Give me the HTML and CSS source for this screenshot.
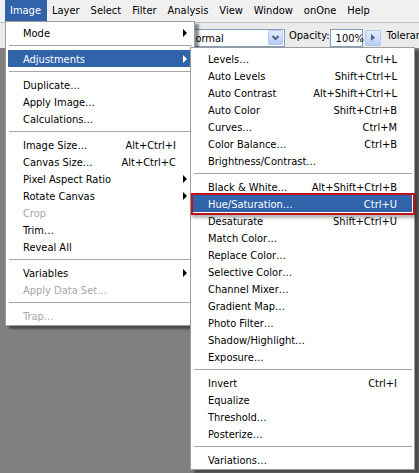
FILE: index.html
```html
<!DOCTYPE html>
<html lang="en">
<head>
<meta charset="utf-8">
<title>Image menu</title>
<link rel="stylesheet" href="styles.css">
</head>
<body>
<div class="screen">
  <nav class="menubar">
    <span class="menubar-item open">Image</span>
    <span class="menubar-item">Layer</span>
    <span class="menubar-item">Select</span>
    <span class="menubar-item">Filter</span>
    <span class="menubar-item">Analysis</span>
    <span class="menubar-item">View</span>
    <span class="menubar-item">Window</span>
    <span class="menubar-item">onOne</span>
    <span class="menubar-item">Help</span>
  </nav>

  <div class="options">
    <div class="combo">
      <span class="combo-text">Normal</span>
      <span class="combo-btn">
        <svg width="13" height="13" viewBox="0 0 13 13"><path d="M3.5 5 L6.5 8 L9.5 5" fill="none" stroke="#4d6185" stroke-width="2"/></svg>
      </span>
    </div>
    <span class="opt-label">Opacity:</span>
    <span class="field">100%</span>
    <span class="spin-btn">
      <svg width="13" height="13" viewBox="0 0 13 13"><path d="M5 3 L9 6.5 L5 10 Z" fill="#4d6185"/></svg>
    </span>
    <span class="opt-label tol">Tolerance:</span>
  </div>

  <div class="menu image-menu">
    <div class="item"><span>Mode</span><span></span><i class="arrow"></i></div>
    <div class="sep"></div>
    <div class="item active"><span>Adjustments</span><span></span><i class="arrow"></i></div>
    <div class="sep"></div>
    <div class="item"><span>Duplicate…</span></div>
    <div class="item"><span>Apply Image…</span></div>
    <div class="item"><span>Calculations…</span></div>
    <div class="sep"></div>
    <div class="item"><span>Image Size…</span><span>Alt+Ctrl+I</span></div>
    <div class="item"><span>Canvas Size…</span><span>Alt+Ctrl+C</span></div>
    <div class="item"><span>Pixel Aspect Ratio</span><span></span><i class="arrow"></i></div>
    <div class="item"><span>Rotate Canvas</span><span></span><i class="arrow"></i></div>
    <div class="item disabled"><span>Crop</span></div>
    <div class="item"><span>Trim…</span></div>
    <div class="item"><span>Reveal All</span></div>
    <div class="sep"></div>
    <div class="item"><span>Variables</span><span></span><i class="arrow"></i></div>
    <div class="item disabled"><span>Apply Data Set…</span></div>
    <div class="sep"></div>
    <div class="item disabled"><span>Trap…</span></div>
  </div>

  <div class="menu adjust-menu">
    <div class="item"><span>Levels…</span><span>Ctrl+L</span></div>
    <div class="item"><span>Auto Levels</span><span>Shift+Ctrl+L</span></div>
    <div class="item"><span>Auto Contrast</span><span>Alt+Shift+Ctrl+L</span></div>
    <div class="item"><span>Auto Color</span><span>Shift+Ctrl+B</span></div>
    <div class="item"><span>Curves…</span><span>Ctrl+M</span></div>
    <div class="item"><span>Color Balance…</span><span>Ctrl+B</span></div>
    <div class="item"><span>Brightness/Contrast…</span></div>
    <div class="sep"></div>
    <div class="item"><span>Black &amp; White…</span><span>Alt+Shift+Ctrl+B</span></div>
    <div class="item active marked"><span>Hue/Saturation…</span><span>Ctrl+U</span></div>
    <div class="item"><span>Desaturate</span><span>Shift+Ctrl+U</span></div>
    <div class="item"><span>Match Color…</span></div>
    <div class="item"><span>Replace Color…</span></div>
    <div class="item"><span>Selective Color…</span></div>
    <div class="item"><span>Channel Mixer…</span></div>
    <div class="item"><span>Gradient Map…</span></div>
    <div class="item"><span>Photo Filter…</span></div>
    <div class="item"><span>Shadow/Highlight…</span></div>
    <div class="item"><span>Exposure…</span></div>
    <div class="sep"></div>
    <div class="item"><span>Invert</span><span>Ctrl+I</span></div>
    <div class="item"><span>Equalize</span></div>
    <div class="item"><span>Threshold…</span></div>
    <div class="item"><span>Posterize…</span></div>
    <div class="sep"></div>
    <div class="item"><span>Variations…</span></div>
  </div>
</div>
</body>
</html>
```
FILE: styles.css
```css
* { box-sizing: border-box; }

html, body {
  margin: 0;
  padding: 0;
}

body {
  background: #808080;
  font-family: "DejaVu Sans Condensed", "Liberation Sans", sans-serif;
  font-size: 11px;
  color: #000;
}

.screen {
  position: relative;
  width: 419px;
  height: 473px;
  overflow: hidden;
  background: #808080;
}

/* top application menu bar */
.menubar {
  display: flex;
  height: 22px;
  padding-left: 4.5px;
  background: #f0f0f0;
  white-space: nowrap;
}

.menubar-item {
  display: flex;
  align-items: center;
  height: 21px;
  padding: 0 5.5px;
}

.menubar-item.open {
  background: #3163ab;
  color: #fff;
}

/* tool options bar */
.options {
  display: flex;
  align-items: center;
  height: 26px;
  padding-left: 183px;
  background: #ebebeb;
  border-top: 1px solid #c4c4c4;
  white-space: nowrap;
}

.options > * {
  flex-shrink: 0;
}

.combo {
  display: flex;
  align-items: center;
  justify-content: space-between;
  width: 102px;
  height: 18px;
  margin-top: 4px;
  padding: 1px;
  background: #fff;
  border: 1px solid #7f9db9;
}

.combo-text {
  padding-left: 3px;
  padding-top: 1px;
}

.combo-btn,
.spin-btn {
  display: flex;
  align-items: center;
  justify-content: center;
  width: 15px;
  height: 15px;
  background: linear-gradient(#e3ecfd, #b9ccf5);
  border: 1px solid #b3c5ee;
  border-radius: 2px;
}

.opt-label {
  margin-left: 4px;
}

.field {
  display: flex;
  align-items: center;
  width: 33px;
  height: 18px;
  margin-left: 0;
  margin-top: 4px;
  padding-left: 5px;
  padding-top: 1px;
  background: #fff;
  border: 1px solid #7f9db9;
}

.spin-btn {
  width: 16px;
  height: 16px;
  margin-left: 2px;
  margin-top: 4px;
}

.opt-label.tol {
  margin-left: 6px;
}

/* dropdown menus */
.menu {
  position: absolute;
  background: #fff;
  border: 1px solid #9c9c9c;
  padding: 2px 2px 1px;
  box-shadow: 4px 3px 2px rgba(0, 0, 0, 0.42);
  white-space: nowrap;
}

.image-menu {
  left: 5px;
  top: 21px;
  width: 190px;
}

.adjust-menu {
  left: 190px;
  top: 47px;
  width: 225px;
}

.item {
  display: grid;
  grid-template-columns: 1fr auto 16px;
  align-items: center;
  height: 17px;
  padding-left: 15px;
  padding-top: 1px;
}

.adjust-menu .item {
  grid-template-columns: 1fr auto 15px;
}

.item.active {
  background: #3163ab;
  color: #fff;
}

.item.disabled {
  color: #a7a7a7;
}

.arrow {
  width: 0;
  height: 0;
  margin-left: 7px;
  margin-top: -1px;
  border-left: 4px solid #000;
  border-top: 4px solid transparent;
  border-bottom: 4px solid transparent;
}

.item.active .arrow {
  border-left-color: #fff;
}

.sep {
  height: 1px;
  margin: 4px 0 4px 1px;
  background: #a6a6a6;
}

/* red callout frame around the highlighted command */
.item.marked {
  position: relative;
}

.item.marked::after {
  content: "";
  position: absolute;
  top: -2px;
  right: -3px;
  bottom: -3px;
  left: -2px;
  border: 2px solid #c0121a;
  box-shadow: 1px 3px 3px rgba(0, 0, 0, 0.3);
}
```
